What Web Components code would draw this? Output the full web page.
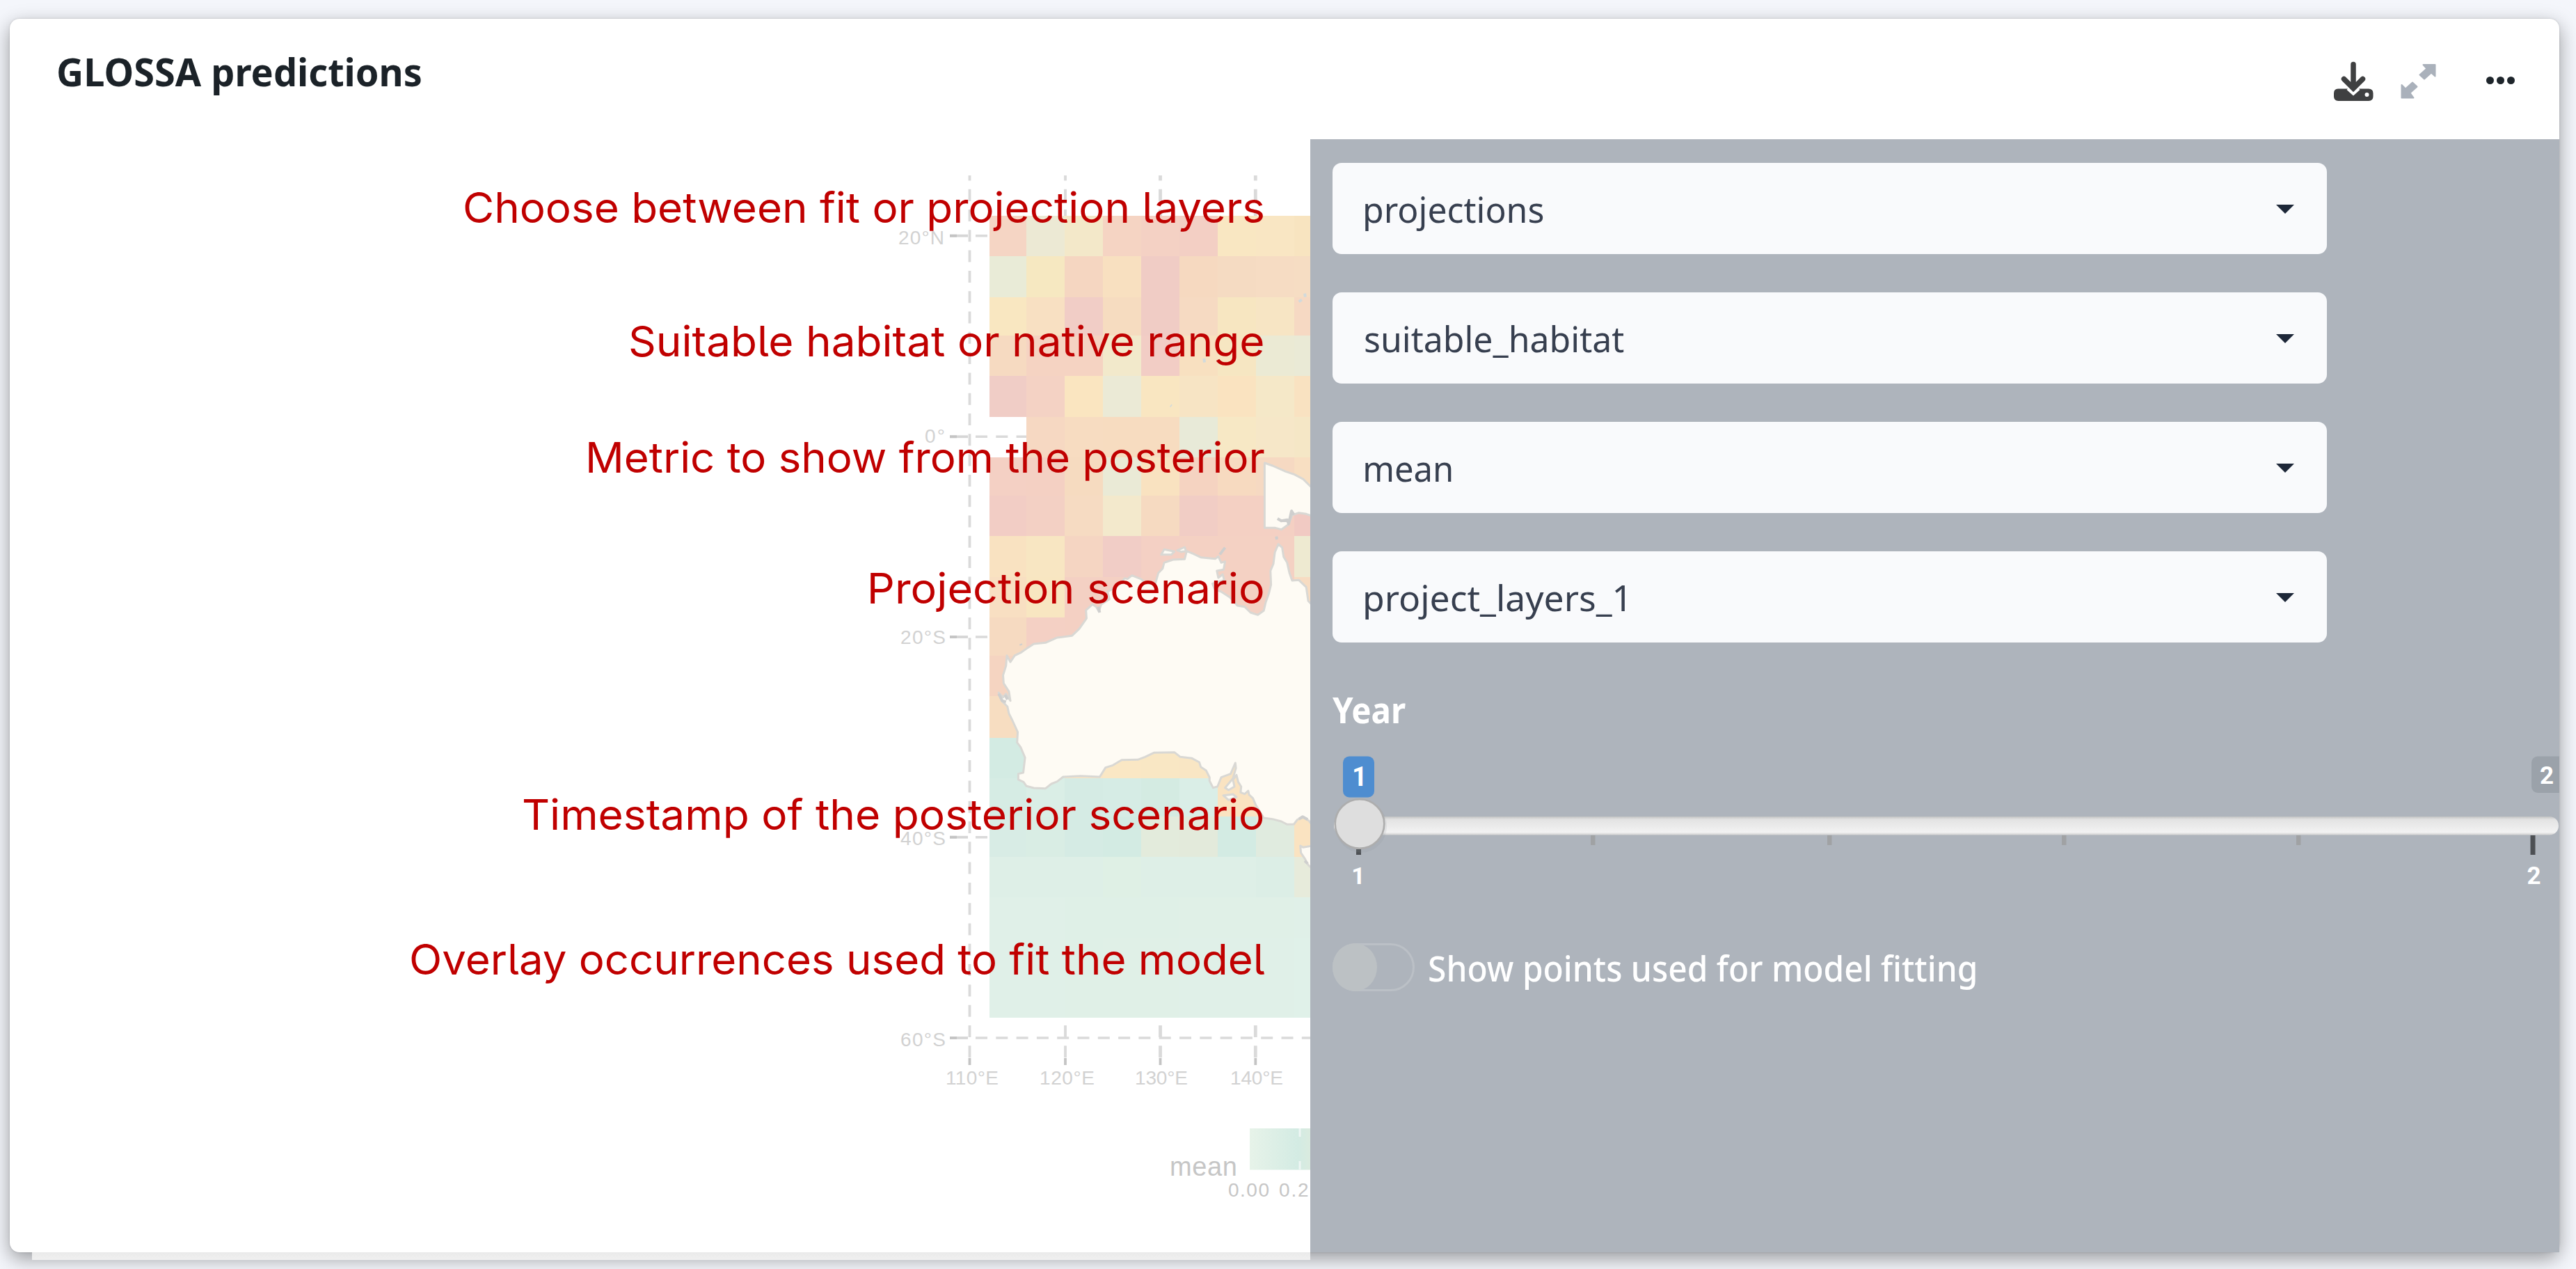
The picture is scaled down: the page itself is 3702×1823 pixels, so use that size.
<!DOCTYPE html>
<html lang="en">
<head>
<meta charset="utf-8">
<title>GLOSSA predictions</title>
<style>
  html, body { margin: 0; height: 100%; }
  body { background: #f4f6fb; font-family: "Noto Sans", "Open Sans", sans-serif; overflow: hidden; }
</style>
</head>
<body>
<prediction-page></prediction-page>
<script>
/* Single line of text whose inked width is set by the "w" attribute. */
class FitText extends HTMLElement {
  connectedCallback() {
    const a = (n, d) => this.getAttribute(n) || d;
    const label = a('label', ''), w = +a('w', 100), size = +a('size', 50), base = +a('base', size * 0.9);
    const weight = a('weight', '400'), family = a('family', 'Noto Sans');
    const ctx = document.createElement('canvas').getContext('2d');
    ctx.font = `${weight} ${size}px "${family}", sans-serif`;
    const m = ctx.measureText(label);
    const k = w / (m.actualBoundingBoxLeft + m.actualBoundingBoxRight);
    this.attachShadow({ mode: 'open' }).innerHTML = `
      <style>
        :host { display: block; flex: none; width: ${w}px; height: ${size}px; }
        svg { display: block; overflow: visible; }
        text { font: ${weight} ${size}px "${family}", sans-serif; fill: currentColor; font-feature-settings: ${a('features', 'normal')}; }
      </style>
      <svg width="${w}" height="${size}"><text transform="translate(${m.actualBoundingBoxLeft * k} ${base}) scale(${k} 1)"></text></svg>`;
    this.shadowRoot.querySelector('text').textContent = label;
  }
}

class CardHeader extends HTMLElement {
  connectedCallback() {
    this.attachShadow({ mode: 'open' }).innerHTML = `
      <style>
        :host { display: flex; box-sizing: border-box; height: 173px; padding: 52px 62px 0 70px; color: #1b2228; }
        .tools { margin-left: auto; display: flex; align-items: flex-start; padding-top: 8px; }
        svg { display: block; }
      </style>
      <fit-text label="GLOSSA predictions" w="521" size="56" base="45" weight="700"></fit-text>
      <div class="tools">
        <svg width="262" height="62" viewBox="3354 87 262 62">
          <path fill="#3f4041" d="M3360 127.500h13.500l8.500 7.500 8.500-7.500h13.500q6.500 0 6.500 6.500v4.500q0 6.500-6.500 6.500h-43.500q-6.500 0-6.500-6.500v-4.500q0-6.500 6-6.500z"/>
          <circle cx="3401.500" cy="136" r="3" fill="#fff"/>
          <path d="M3373.500 128l8.500 7.500 8.500-7.500" fill="none" stroke="#fff" stroke-width="3"/>
          <path d="M3382 92.500v34M3368.500 113.500l13.500 13.500 13.500-13.500" fill="none" stroke="#3f4041" stroke-width="7.500" stroke-linecap="round"/>
          <g fill="#aab1bb" stroke="#aab1bb" stroke-width="2" stroke-linejoin="round">
            <path d="M3482.500 93h17v16.500l-5.500-5-10 9-6.500-6 10-9z"/>
            <path d="M3468.500 140.500h-17v-18.500l5.500 5.500 10-9 6.500 6-10 9z"/>
          </g>
          <g fill="#1e252b"><circle cx="3578.500" cy="115.500" r="5.500"/><circle cx="3593.500" cy="115.500" r="5.500"/><circle cx="3608.500" cy="115.500" r="5.500"/></g>
        </svg>
      </div>`;
  }
}

class HabitatMap extends HTMLElement {
  connectedCallback() {
    const xs = [1422, 1475, 1530, 1584.6, 1639.8, 1695, 1749.7, 1804.8, 1859.5, 1883];
    const ys = [310, 368, 427, 482, 540, 598.5, 657, 712, 770, 829, 887, 942, 1000, 1060, 1118, 1173, 1231, 1289, 1347, 1404, 1462];
    const rows = [
      'f5d5c4 ece9d4 f3e8c9 f5d4c3 f4d1c4 f3cfc4 f9e7c2 f9e6c3 f8e4c0',
      'e9ebd7 f6e8c1 f5d6c1 f8e0c0 f0ccc5 f6d9c0 f5dbc2 f6dcc3 f6ddc3',
      'f9e7c1 f8e0c2 f1cdc6 f6dcc0 f0ccc5 f6dac2 f7e6c1 f7e5c4 f6d9c3',
      'f6dac1 f5d3c2 f5d3c2 f2e9cb f2cdc5 f8e0c0 f6e6c2 ebead4 eaead6',
      'f0cdc6 f4d2c4 fae5c0 ebead6 f9e6c1 f7e4c4 fae3c0 f5e8c8 f9e2c1',
      'none f6d8c2 f7dcc1 f7dcc0 f7dcc0 e8ead8 f7e8c5 f6e7c8 f5e7c6',
      'f4d0c4 f4d0c3 f6dbc0 eaead6 f9e2c0 f5d3c1 f7dac0 f6d9c2 f8dfc2',
      'f2cdc5 f3d0c4 f6dbc2 f3e9cc f6dac1 f1cdc5 f4d0c3 f4d0c3 f1cac3',
      'f9e2c1 f8e6c2 f5d5c2 f1cdc6 f4d0c4 f4d1c3 f4d1c3 f4d1c3 eeead1',
      'f8dfc2 f8e6c1 f4d0c3 f4d0c3 f4d0c3 f4d1c3 f4d1c3 f4d1c3 f7dcc2',
      'f6dac1 f4d0c4 f4d0c3 f4d0c3 f4d0c3 f4d1c3 f4d1c3 f4d1c3 f7dcc2',
      'f5d4c1 f4d0c3 f4d0c3 f4d0c3 f4d0c3 f4d1c3 f4d1c3 f4d1c3 f7dcc2',
      'f7ddc1 f7ddc1 f9e8c4 f9e8c4 f9e8c4 f9e8c4 f9e8c4 f9e8c4 f9e8c4',
      'd3ebe3 d3ebe3 fae5c4 fae7c4 f9e7c4 f9e6c4 f9e3c1 fae3c1 fae3c1',
      'd6ece4 daeee6 d5ebe4 d6ece5 d4ebe2 daeee7 fae3c1 fae3c1 fae3c1',
      'd8ece5 d9ede4 d5ebe4 d3ebe3 e3ebdc e3eadb d3ebe3 e0ebdf fae3c1',
      'deefe7 deefe7 deefe7 dff0e5 deefe7 deefe7 deefe7 dceee6 e7ebdb',
      'e0f0e8 e0f0e8 dff0e7 dff0e7 dff0e7 e0f0e7 e0f0e7 e0f0e7 e0f0e8',
      'e0f0e8 e0f0e8 dff0e7 e0f0e7 e0f0e7 e0f0e8 e0f0e8 e0f0e8 e0f1e9',
      'e0f0e8 e0f0e8 e0f0e7 e0f0e7 e0f0e7 e0f0e8 e0f0e8 e0f0e8 e0f1e9'
    ];
    let cells = '';
    rows.forEach((r, j) => r.split(' ').forEach((c, i) => {
      if (c !== 'none') cells += `<rect x="${xs[i]}" y="${ys[j]}" width="${xs[i + 1] - xs[i] + (i < 8 ? .6 : 0)}" height="${ys[j + 1] - ys[j] + (j < 19 && !(j === 4 && i === 0) ? .6 : 0)}" fill="#${c}"/>`;
    }));
    const label = (t, x0, x1, y, size = 28, fill = '#d2d2d2') =>
      `<text x="${x0 - 2}" y="${y}" font-size="${size}" fill="${fill}" textLength="${x1 - x0 + 4}">${t}</text>`;
    const vx = [1393.5, 1531, 1667.5, 1804.3], hy = [338.7, 627.3, 915, 1202.7];
    this.attachShadow({ mode: 'open' }).innerHTML = `
      <style>
        :host { display: block; flex: none; width: 1869px; height: 1599px; overflow: hidden; }
        svg { display: block; font-family: "Liberation Sans", Arial, sans-serif; }
        .land { fill: #fefbf4; stroke: #d9d8d4; stroke-width: 3; stroke-linejoin: round; }
        .land * { vector-effect: non-scaling-stroke; }
      </style>
      <svg width="1869" height="1599" viewBox="14 200 1869 1599">
        <defs><linearGradient id="bar"><stop offset="0" stop-color="#e7f3e9"/><stop offset=".8" stop-color="#d3ebe3"/><stop offset="1" stop-color="#daebdf"/></linearGradient></defs>
        <g stroke="#dadada" stroke-width="3.500" stroke-dasharray="17 12.300">
          ${vx.map((x, i) => `<path d="M${x} 252V1521" stroke-dashoffset="9.600" stroke-width="${i > 1 ? 4.8 : 3.8}"/>`).join('')}
          ${hy.map(y => `<path d="M1402 ${y}H1883"/>`).join('')}
          <path d="M1402 1491H1883"/>
        </g>
        <g stroke="#d6d6d6" stroke-width="3.800">
          ${[...hy, 1491].map(y => `<path d="M1365 ${y}H1391"/><path d="M1365 ${y}H1375" stroke="#c4c4c4"/>`).join('')}
          ${vx.map(x => `<path d="M${x} 1520V1530" stroke="#c4c4c4"/>`).join('')}
        </g>
        <g shape-rendering="crispEdges">${cells}</g>
        <g class="land" transform="translate(1250 620) scale(.4209 .33333)">
          <path d="M535 935L560 915 600 910 640 888 690 880 715 850 740 805 738 770 760 745 773 755 782 775 790 745 818 722 812 690 840 670 856 655 870 632 880 635 895 620 925 635 945 655 975 655 985 610 1000 590 1005 565 1035 552 1075 550 1082 515 1105 527 1130 542 1180 548 1190 538 1200 565 1213 560 1208 595 1185 600 1190 630 1205 615 1210 640 1170 655 1178 680 1200 690 1230 715 1255 750 1280 755 1300 780 1325 790 1345 772 1352 735 1362 700 1370 660 1368 600 1378 570 1383 520 1395 485 1408 500 1413 540 1425 565 1433 610 1442 642 1465 640 1490 670 1497 730 1512 750V1700L1500 1678 1480 1663 1460 1672 1448 1692 1425 1693 1405 1680 1375 1670 1345 1665 1318 1610 1308 1580 1295 1565 1292 1548 1280 1562 1266 1555 1268 1530 1258 1510 1252 1480 1240 1500 1245 1530 1225 1545 1213 1535 1240 1495 1250 1450 1248 1428 1232 1475 1200 1490 1187 1530 1172 1535 1160 1505 1160 1490 1148 1460 1130 1445 1125 1425 1100 1408 1060 1402 1040 1382 970 1384 940 1402 915 1414 860 1415 830 1438 805 1448 785 1488 720 1484 660 1488 640 1508 620 1518 600 1538 560 1536 535 1528 525 1510 507 1500 507 1475 524 1470 530 1405 515 1360 503 1340 505 1295 487 1245 475 1215 470 1185 450 1160 440 1125 455 1145 465 1130 480 1160 475 1120 457 1085 455 1050 465 1010 468 965 480 993 495 965 515 953Z"/>
          <path d="M995 530L1005 508 1040 517 1030 530Z"/><path d="M1050 512L1075 498 1080 515 1062 518Z"/>
          <path d="M1207 1568L1240 1563 1252 1575 1225 1588Z"/>
          <path d="M1348 135L1375 147 1420 172 1450 185 1480 205 1512 245V365L1490 355 1465 350 1442 360 1430 400 1405 422 1385 415 1348 415Z"/>
          <path d="M1470 1785L1480 1792 1512 1785V1885L1497 1868 1485 1840 1472 1815Z"/>
          <path d="M1392 375L1405 385 1425 380 1430 398 1440 342 1448 358M1195 530L1213 500M440 1130L452 1160 465 1165M462 1135L470 1155M1388 452L1390 465M515 915L517 921M780 755L785 780M1465 1670L1478 1660 1495 1672M1485 1850L1495 1862" fill="none" stroke="#cfcfce" stroke-width="4"/>
          <path d="M1465 -560L1475 -568M1485 -595L1487 -580M1141 -315L1143 -298M1027 -113L1030 -110" stroke="#d2dadb" stroke-width="4"/>
        </g>
        ${label('20°N', 1293, 1355, 350.7)}${label('0°', 1331, 1356, 635.5)}${label('20°S', 1296, 1357, 924.7)}${label('40°S', 1296, 1357, 1213.5)}${label('60°S', 1296, 1357, 1502.7)}
        ${label('110°E', 1361, 1433, 1558)}${label('120°E', 1496, 1571, 1558)}${label('130°E', 1633, 1705, 1558)}${label('140°E', 1770, 1842, 1558)}
        ${label('mean', 1683, 1776, 1688.5, 38, '#c6c6c6')}
        <rect x="1796" y="1621" width="87" height="59.500" fill="url(#bar)"/>
        <path d="M1868 1621v12M1868 1668v12" stroke="#eef6f3" stroke-width="3"/>
        ${label('0.00', 1767, 1822, 1719, 28, '#c6c6c6')}${label('0.25', 1840, 1896, 1719, 28, '#c6c6c6')}
      </svg>`;
  }
}

/* Red captions laid over the faded plot. */
class CaptionLayer extends HTMLElement {
  connectedCallback() {
    const notes = [
      ['Choose between fit or projection layers', 668, 1814, 320],
      ['Suitable habitat or native range', 906, 1814, 511.5],
      ['Metric to show from the posterior', 846, 1817, 679],
      ['Projection scenario', 1251, 1815, 866.5],
      ['Timestamp of the posterior scenario', 752, 1815, 1192],
      ['Overlay occurrences used to fit the model', 591, 1810, 1399.5]
    ];
    this.attachShadow({ mode: 'open' }).innerHTML = `
      <style>
        :host { position: absolute; left: 46px; top: 200px; width: 1837px; height: 1610px; color: #c00000; pointer-events: none; }
        .veil { position: absolute; left: 0; right: 0; bottom: 0; height: 11px; background: linear-gradient(#eaeaea, #f0f0f0); }
        fit-text { position: absolute; }
      </style>
      <div class="veil"></div>
      ${notes.map(([t, a, b, y]) => `<fit-text label="${t}" family="Inter" size="61" base="50" w="${b - a}" features="'cv05'" style="left:${a - 46}px;top:${y - 250}px"></fit-text>`).join('')}`;
  }
}

class SelectBox extends HTMLElement {
  connectedCallback() {
    this.attachShadow({ mode: 'open' }).innerHTML = `
      <style>
        :host { display: flex; align-items: center; box-sizing: border-box; width: 1429px; height: 131px; padding: 0 46px 0 47px; border-radius: 13px; background: #f9fafc; color: #373f4f; }
        svg { display: block; margin: 2px 0 0 auto; }
      </style>
      <slot></slot>
      <svg width="28" height="15" viewBox="0 0 28 15"><path d="M1 1h26L14 14z" fill="#1d2738"/></svg>`;
  }
}

class YearSlider extends HTMLElement {
  connectedCallback() {
    this.attachShadow({ mode: 'open' }).innerHTML = `
      <style>
        :host { display: block; width: 1763px; height: 200px; }
        svg { display: block; }
        text { font-family: Roboto, "Liberation Sans", sans-serif; font-weight: 700; fill: #fff; text-anchor: middle; }
      </style>
      <svg width="1763" height="200" viewBox="1915 1080 1763 200">
        <defs>
          <linearGradient id="track" x2="0" y2="1"><stop offset="0" stop-color="#c2c3c3"/><stop offset=".16" stop-color="#e3e3e3"/><stop offset=".85" stop-color="#f2f2f2"/><stop offset="1" stop-color="#d0d0d0"/></linearGradient>
        </defs>
        <g fill="#a0a2a4"><rect x="2286" y="1200" width="6.500" height="14"/><rect x="2626" y="1200" width="6.500" height="14"/><rect x="2963" y="1200" width="6.500" height="14"/><rect x="3300" y="1200" width="6.500" height="14"/></g>
        <g fill="#4d5054"><rect x="1949" y="1200" width="7" height="28"/><rect x="3636.500" y="1200" width="7" height="28"/></g>
        <rect x="1917" y="1173" width="1760" height="26.500" rx="13" fill="url(#track)"/>
        <ellipse cx="1956" cy="1187" rx="37" ry="38" fill="#8f959c" opacity=".15"/>
        <circle cx="1954" cy="1183.500" r="35.300" fill="#dedede" stroke="#adadad" stroke-width="2.600"/>
        <rect x="1930" y="1086.500" width="45" height="59" rx="9" fill="#4e8dd0"/>
        <rect x="3638" y="1086.500" width="50" height="52.500" rx="9" fill="#9ba2aa"/>
        <text x="1954" y="1128.500" font-size="38">1</text>
        <text x="3660" y="1125.500" font-size="35">2</text>
        <text x="1952" y="1269.500" font-size="34">1</text>
        <text x="3641.500" y="1269.500" font-size="35">2</text>
      </svg>`;
  }
}

class ToggleSwitch extends HTMLElement {
  connectedCallback() {
    this.attachShadow({ mode: 'open' }).innerHTML = `
      <style>
        :host { display: flex; align-items: center; gap: 21px; color: #fff; }
        .pill { box-sizing: border-box; width: 118px; height: 69px; border: 3px solid #bbc0c6; border-radius: 35px; }
        .knob { width: 64px; height: 69px; margin: -3px; border-radius: 50%; background: #bcc1c4; }
      </style>
      <div class="pill"><div class="knob"></div></div><slot></slot>`;
  }
}

class ControlSidebar extends HTMLElement {
  connectedCallback() {
    this.attachShadow({ mode: 'open' }).innerHTML = `
      <style>
        :host { display: flex; flex-direction: column; box-sizing: border-box; width: 1795px; height: 1599px; padding: 34px 0 0 32px; background: #aeb4bc; overflow: hidden; color: #fff; }
        .selects { display: flex; flex-direction: column; gap: 55px; }
        .year { padding: 71px 0 34px; }
        toggle-switch { margin-top: 75px; }
      </style>
      <div class="selects">
        <select-box><fit-text label="projections" w="256" size="51" base="46"></fit-text></select-box>
        <select-box><fit-text label="suitable_habitat" w="372" size="51" base="46"></fit-text></select-box>
        <select-box><fit-text label="mean" w="124" size="51" base="46"></fit-text></select-box>
        <select-box><fit-text label="project_layers_1" w="374" size="51" base="46"></fit-text></select-box>
      </div>
      <div class="year"><fit-text label="Year" w="105" size="52" base="45" weight="700"></fit-text></div>
      <year-slider></year-slider>
      <toggle-switch><fit-text label="Show points used for model fitting" w="785" size="51" base="46" weight="500"></fit-text></toggle-switch>`;
  }
}

class PredictionPage extends HTMLElement {
  connectedCallback() {
    this.attachShadow({ mode: 'open' }).innerHTML = `
      <style>
        :host { display: block; box-sizing: border-box; width: 3702px; height: 1823px; padding: 27px 24px 24px 14px; overflow: hidden; }
        .card { height: 1772px; border-radius: 14px; background: #fff; box-shadow: 0 9px 28px rgba(0, 0, 0, .38), 0 0 3px rgba(0, 0, 0, .15); }
        .body { display: flex; }
      </style>
      <div class="card">
        <card-header></card-header>
        <div class="body"><habitat-map></habitat-map><control-sidebar></control-sidebar></div>
      </div>
      <caption-layer></caption-layer>`;
  }
}

customElements.define('fit-text', FitText);
customElements.define('card-header', CardHeader);
customElements.define('habitat-map', HabitatMap);
customElements.define('caption-layer', CaptionLayer);
customElements.define('select-box', SelectBox);
customElements.define('year-slider', YearSlider);
customElements.define('toggle-switch', ToggleSwitch);
customElements.define('control-sidebar', ControlSidebar);
customElements.define('prediction-page', PredictionPage);
</script>
</body>
</html>
